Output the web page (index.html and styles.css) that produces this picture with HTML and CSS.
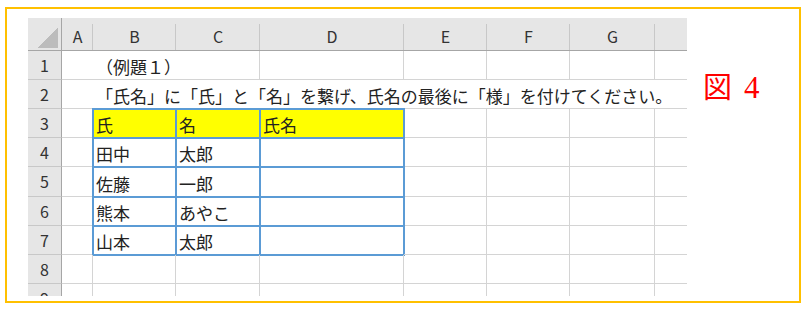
FILE: index.html
```html
<!DOCTYPE html>
<html lang="ja">
<head>
    <meta charset="UTF-8">
    <title>例題１ 氏名の連結</title>
    <link rel="stylesheet" href="styles.css">
</head>
<body>
    <div class="frame">
        <div class="sheet">
            <!-- 列見出し -->
            <div class="corner"></div>
            <div class="col-head">A</div>
            <div class="col-head">B</div>
            <div class="col-head">C</div>
            <div class="col-head">D</div>
            <div class="col-head">E</div>
            <div class="col-head">F</div>
            <div class="col-head">G</div>
            <div class="col-head"></div>

            <!-- 1行目 -->
            <div class="row-head">1</div>
            <div class="cell open"></div>
            <div class="cell open txt">（例題１）</div>
            <div class="cell"></div><div class="cell"></div><div class="cell"></div>
            <div class="cell"></div><div class="cell"></div><div class="cell"></div>

            <!-- 2行目：問題文は右のセルへはみ出す -->
            <div class="row-head">2</div>
            <div class="cell open"></div>
            <div class="cell open txt">「氏名」に「氏」と「名」を繋げ、氏名の最後に「様」を付けてください。</div>
            <div class="cell open"></div><div class="cell open"></div><div class="cell open"></div>
            <div class="cell open"></div><div class="cell open"></div><div class="cell open"></div>

            <!-- 3行目：表の見出し -->
            <div class="row-head">3</div>
            <div class="cell"></div>
            <div class="cell txt tb yellow">氏</div>
            <div class="cell txt tb yellow">名</div>
            <div class="cell txt tb yellow">氏名</div>
            <div class="cell"></div><div class="cell"></div><div class="cell"></div><div class="cell"></div>

            <div class="row-head">4</div>
            <div class="cell"></div>
            <div class="cell txt tb">田中</div>
            <div class="cell txt tb">太郎</div>
            <div class="cell txt tb"></div>
            <div class="cell"></div><div class="cell"></div><div class="cell"></div><div class="cell"></div>

            <div class="row-head">5</div>
            <div class="cell"></div>
            <div class="cell txt tb">佐藤</div>
            <div class="cell txt tb">一郎</div>
            <div class="cell txt tb"></div>
            <div class="cell"></div><div class="cell"></div><div class="cell"></div><div class="cell"></div>

            <div class="row-head">6</div>
            <div class="cell"></div>
            <div class="cell txt tb">熊本</div>
            <div class="cell txt tb">あやこ</div>
            <div class="cell txt tb"></div>
            <div class="cell"></div><div class="cell"></div><div class="cell"></div><div class="cell"></div>

            <div class="row-head">7</div>
            <div class="cell"></div>
            <div class="cell txt tb">山本</div>
            <div class="cell txt tb">太郎</div>
            <div class="cell txt tb"></div>
            <div class="cell"></div><div class="cell"></div><div class="cell"></div><div class="cell"></div>

            <div class="row-head">8</div>
            <div class="cell"></div><div class="cell"></div><div class="cell"></div><div class="cell"></div>
            <div class="cell"></div><div class="cell"></div><div class="cell"></div><div class="cell"></div>

            <div class="row-head">9</div>
            <div class="cell"></div><div class="cell"></div><div class="cell"></div><div class="cell"></div>
            <div class="cell"></div><div class="cell"></div><div class="cell"></div><div class="cell"></div>
        </div>

        <div class="fig-label">図<span class="num">4</span></div>
    </div>
</body>
</html>
```

FILE: styles.css
```css
body {
    margin: 0;
    background: #fff;
    font-family: "Noto Sans CJK JP", "Noto Sans", sans-serif;
    color: #222;
}
.frame {
    box-sizing: border-box;
    width: 796px;
    height: 296px;
    margin: 7px 0 0 5px;
    padding: 9px 0 0 21px;
    border: 2px solid #ffc000;
    display: flex;
    align-items: flex-start;
}
.sheet {
    width: 659px;
    height: 278px;
    overflow: hidden;
    flex-shrink: 0;
    display: grid;
    grid-template-columns: 34px 31px 83px 84px 144px 83px 83px 85px 84px;
    grid-template-rows: 33px 29px 29px 29px 29px 30px 29px 29px 29px 29px;
}
.sheet > div {
    box-sizing: border-box;
}

/* 見出し */
.corner {
    background:
        linear-gradient(to bottom right, transparent 50%, #bcbcbc 50%) right 3px bottom 2px / 20px 20px no-repeat,
        #e6e6e6;
    border-right: 1px solid #a6a6a6;
    border-bottom: 1px solid #a6a6a6;
}
.col-head {
    background:
        linear-gradient(#c8c8c8, #c8c8c8) right bottom / 1px 26px no-repeat,
        #e6e6e6;
    border-bottom: 1px solid #a6a6a6;
    font-size: 16px;
    line-height: 16px;
    color: #333;
    display: flex;
    align-items: flex-end;
    justify-content: center;
    padding-bottom: 6px;
}
.row-head {
    background: #e6e6e6;
    border-right: 1px solid #a6a6a6;
    border-bottom: 1px solid #c8c8c8;
    font-size: 16px;
    line-height: 28px;
    text-align: center;
    color: #333;
}

/* セル */
.cell {
    border-right: 1px solid #d4d4d4;
    border-bottom: 1px solid #d4d4d4;
}
.cell.open {
    border-right: none;
}
.txt {
    font-size: 17px;
    line-height: 17px;
    white-space: nowrap;
    display: flex;
    align-items: flex-end;
    padding: 0 0 4px 3px;
}
.tb {
    outline: 2px solid #5b9bd5;
    outline-offset: -1px;
}
.yellow {
    background: #ffff00;
}

.fig-label {
    margin: 53px 0 0 16px;
    font-size: 29px;
    line-height: 1;
    color: #ff0000;
    white-space: nowrap;
}
.fig-label .num {
    font-family: "Liberation Serif", serif;
    font-size: 31px;
    margin-left: 12px;
}
```
